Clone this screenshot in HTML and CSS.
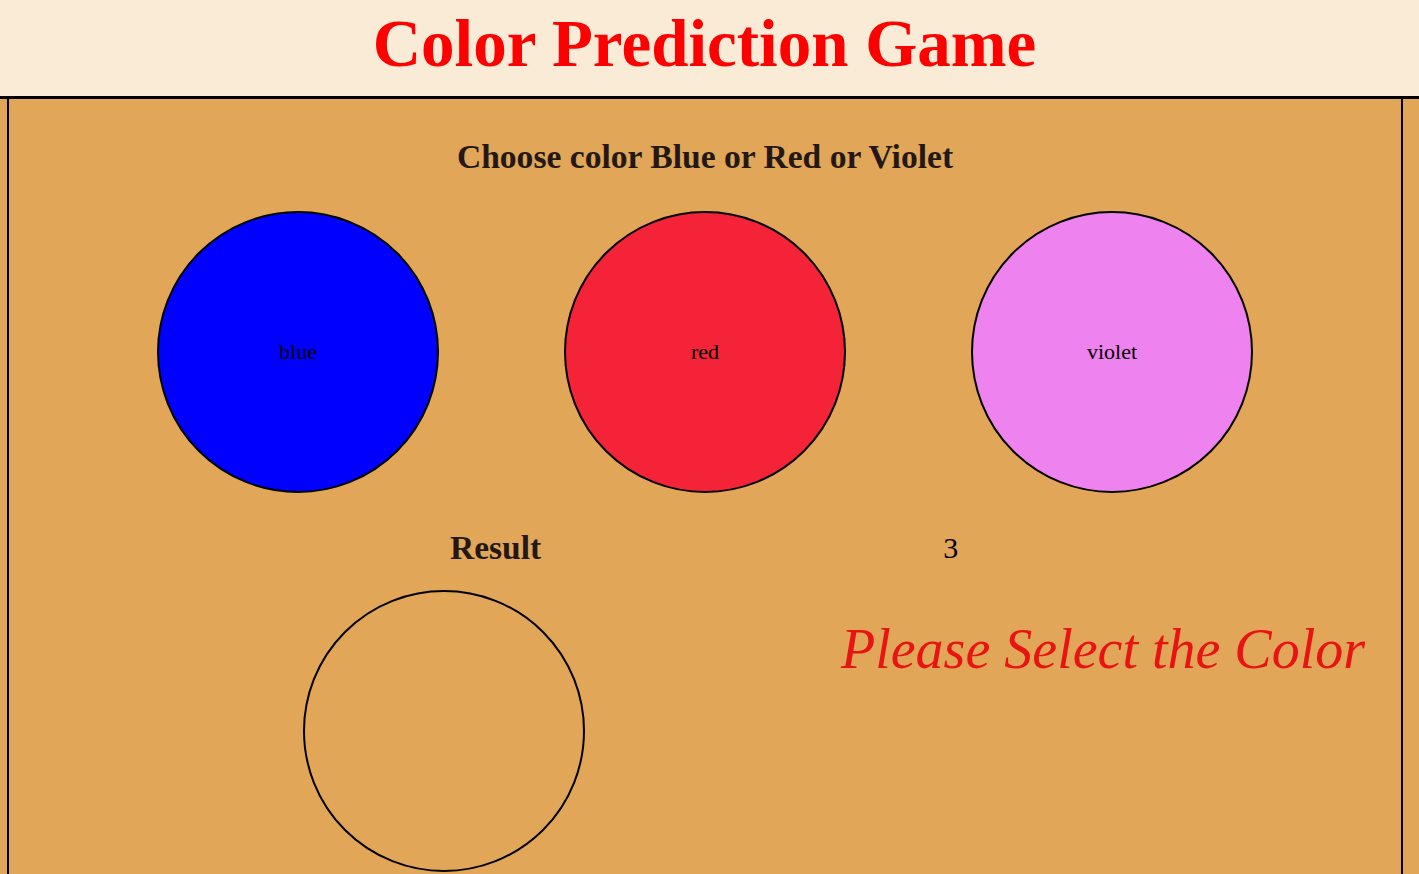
FILE: index.html
```html
<!DOCTYPE html>
<html>
<head>
<meta charset="utf-8">
<link rel="stylesheet" href="styles.css">
</head>
<body>
<header class="header">
  <h1 class="title">Color Prediction Game</h1>
</header>
<main class="game">
  <h2 class="prompt">Choose color Blue or Red or Violet</h2>
  <div class="choices">
    <div class="circle blue">blue</div>
    <div class="circle red">red</div>
    <div class="circle violet">violet</div>
  </div>
  <div class="result-row">
    <div class="result-label">Result</div>
    <div class="count">3</div>
  </div>
  <div class="result-body">
    <div class="circle result"></div>
    <div class="message">Please Select the Color</div>
  </div>
</main>
</body>
</html>
```
FILE: styles.css
```css
html, body {
  margin: 0;
  padding: 0;
}
body {
  background: #e1a657;
  font-family: "Liberation Serif", "Times New Roman", serif;
  overflow: hidden;
  height: 874px;
}
.header {
  background: #faebd7;
  height: 96px;
  border-bottom: 3px solid #000;
  display: flex;
  justify-content: center;
}
.title {
  margin: 0;
  color: #ff0000;
  font-size: 67px;
  font-weight: bold;
  line-height: 86px;
  transform: translateX(-5px);
}
.game {
  margin: 0 16px 0 7px;
  border-left: 2px solid #000;
  border-right: 2px solid #000;
  height: 800px;
  display: flex;
  flex-direction: column;
}
.prompt {
  margin: 0;
  padding-top: 38px;
  text-align: center;
  font-size: 33.6px;
  font-weight: bold;
  color: #231815;
  line-height: 40px;
}
.choices {
  display: flex;
  justify-content: center;
  gap: 125px;
  margin-top: 34px;
}
.circle {
  width: 278px;
  height: 278px;
  border: 2px solid #000;
  border-radius: 50%;
  display: flex;
  align-items: center;
  justify-content: center;
  font-size: 22px;
  color: #000;
  box-sizing: content-box;
}
.blue { background: #0000ff; }
.red { background: #f52338; }
.violet { background: #ee82ee; }
.result-row {
  display: flex;
  align-items: center;
  margin-top: 37px;
  padding-left: 441px;
  height: 36px;
}
.result-label {
  font-size: 33.5px;
  font-weight: bold;
  color: #231815;
}
.count {
  margin-left: 402px;
  font-size: 30px;
  color: #000;
}
.result-body {
  display: flex;
  align-items: flex-start;
  margin-top: 24px;
  padding-left: 294px;
}
.result {
  background: transparent;
}
.message {
  margin-left: 256px;
  margin-top: 27px;
  font-size: 56px;
  font-style: italic;
  color: #e81414;
  white-space: nowrap;
}
```
